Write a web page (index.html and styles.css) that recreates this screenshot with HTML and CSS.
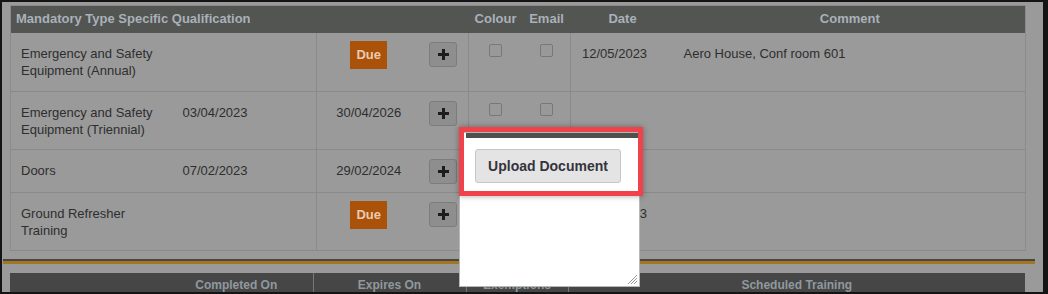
FILE: index.html
```html
<!DOCTYPE html>
<html lang="en">
<head>
    <meta charset="UTF-8">
    <meta name="viewport" content="width=device-width, initial-scale=1.0">
    <title>Mandatory Type Specific Qualification</title>
    <link rel="stylesheet" href="styles.css">
</head>
<body>
    <div class="frame">
        <table class="qual-table">
            <colgroup>
                <col class="c-name">
                <col class="c-done">
                <col class="c-expiry">
                <col class="c-add">
                <col class="c-colour">
                <col class="c-email">
                <col class="c-date">
                <col class="c-comment">
            </colgroup>
            <thead>
                <tr>
                    <th colspan="4" class="title">Mandatory Type Specific Qualification</th>
                    <th>Colour</th>
                    <th>Email</th>
                    <th>Date</th>
                    <th>Comment</th>
                </tr>
            </thead>
            <tbody>
                <tr class="tall">
                    <td>Emergency and Safety Equipment (Annual)</td>
                    <td class="done"></td>
                    <td class="expiry sep badge-cell"><span class="due">Due</span></td>
                    <td class="add-cell"><span class="add-btn"><svg width="11" height="11" viewBox="0 0 11 11"><rect x="4" y="0" width="3" height="11"/><rect x="0" y="4" width="11" height="3"/></svg></span></td>
                    <td class="check-cell sep"><span class="check"></span></td>
                    <td class="check-cell"><span class="check"></span></td>
                    <td class="date sep">12/05/2023</td>
                    <td class="comment">Aero House, Conf room 601</td>
                </tr>
                <tr class="tall">
                    <td>Emergency and Safety Equipment (Triennial)</td>
                    <td class="done">03/04/2023</td>
                    <td class="expiry sep">30/04/2026</td>
                    <td class="add-cell"><span class="add-btn"><svg width="11" height="11" viewBox="0 0 11 11"><rect x="4" y="0" width="3" height="11"/><rect x="0" y="4" width="11" height="3"/></svg></span></td>
                    <td class="check-cell sep"><span class="check"></span></td>
                    <td class="check-cell"><span class="check"></span></td>
                    <td class="date sep"></td>
                    <td class="comment"></td>
                </tr>
                <tr class="short">
                    <td>Doors</td>
                    <td class="done">07/02/2023</td>
                    <td class="expiry sep">29/02/2024</td>
                    <td class="add-cell"><span class="add-btn"><svg width="11" height="11" viewBox="0 0 11 11"><rect x="4" y="0" width="3" height="11"/><rect x="0" y="4" width="11" height="3"/></svg></span></td>
                    <td class="check-cell sep"></td>
                    <td class="check-cell"></td>
                    <td class="date sep"></td>
                    <td class="comment"></td>
                </tr>
                <tr class="tall">
                    <td>Ground Refresher Training</td>
                    <td class="done"></td>
                    <td class="expiry sep badge-cell"><span class="due">Due</span></td>
                    <td class="add-cell"><span class="add-btn"><svg width="11" height="11" viewBox="0 0 11 11"><rect x="4" y="0" width="3" height="11"/><rect x="0" y="4" width="11" height="3"/></svg></span></td>
                    <td class="check-cell sep"></td>
                    <td class="check-cell"></td>
                    <td class="date sep">12/05/2023</td>
                    <td class="comment"></td>
                </tr>
            </tbody>
        </table>

        <div class="divider"></div>

        <table class="training-table">
            <colgroup>
                <col class="t-first">
                <col class="t-done">
                <col class="t-expires">
                <col class="t-exempt">
                <col class="t-scheduled">
            </colgroup>
            <thead>
                <tr>
                    <th></th>
                    <th>Completed On</th>
                    <th class="sep">Expires On</th>
                    <th class="sep">Exemptions</th>
                    <th class="sep">Scheduled Training</th>
                </tr>
            </thead>
        </table>

        <!-- upload menu opened from the + button -->
        <div class="upload-pop">
            <button class="upload-btn">Upload Document</button>
            <svg class="grip" width="10" height="10" viewBox="0 0 10 10">
                <line x1="1" y1="10" x2="10" y2="1"/>
                <line x1="4" y1="10" x2="10" y2="4"/>
                <line x1="7" y1="10" x2="10" y2="7"/>
            </svg>
        </div>
        <div class="highlight"></div>
    </div>
</body>
</html>
```

FILE: styles.css
```css
/* Base */
body {
    margin: 0;
    background-color: #111;
    font-family: "Liberation Sans", Arial, sans-serif;
    font-size: 13px;
    color: #2e2e2e;
}

.frame {
    position: relative;
    box-sizing: border-box;
    width: 1048px;
    height: 294px;
    overflow: hidden;
    background-color: #9a9a9a;
    border: 2px solid #141414;
    border-right: 5px solid #141414;
    padding: 3px 0 0 8px;
}

/* Qualification table */
.qual-table {
    width: 1015px;
    table-layout: fixed;
    border-collapse: collapse;
    border: 1px solid #8b8b8b;
}

.c-name { width: 160px; }
.c-done { width: 146px; }
.c-expiry { width: 104px; }
.c-add { width: 48px; }
.c-colour { width: 54px; }
.c-email { width: 48px; }
.c-date { width: 104px; }
.c-comment { width: 351px; }

.qual-table th {
    height: 25px;
    padding: 0 0 2px;
    background-color: #535553;
    color: #a9b1b8;
    font-size: 13px;
    font-weight: bold;
    text-align: center;
}

.qual-table th.title {
    text-align: left;
    padding-left: 5px;
}

.qual-table td {
    vertical-align: top;
    padding: 12px 8px 0 10px;
    line-height: 17px;
    border-bottom: 1px solid #8a8a8a;
}

.qual-table tr.tall { height: 58px; }
.qual-table tr.short { height: 43px; }

.qual-table td.sep {
    border-left: 1px solid #8a8a8a;
}

.qual-table td.done {
    padding-left: 12px;
}

.qual-table td.expiry {
    padding: 12px 0 0;
    text-align: center;
}

.qual-table td.badge-cell {
    padding-top: 8px;
}

.due {
    display: inline-block;
    width: 37px;
    height: 28px;
    line-height: 28px;
    background-color: #aa5209;
    color: #e9cbb3;
    font-weight: bold;
    font-size: 13px;
}

.qual-table td.add-cell {
    padding: 9px 0 0;
    text-align: center;
}

.add-btn {
    display: inline-flex;
    align-items: center;
    justify-content: center;
    box-sizing: border-box;
    width: 28px;
    height: 25px;
    margin-left: -2px;
    background-color: #8e8e8e;
    border: 1px solid #7c7c7c;
    border-radius: 3px;
}

.add-btn svg {
    fill: #1c1c1c;
}

.qual-table td.check-cell {
    padding: 11px 0 0;
    text-align: center;
}

.check {
    display: inline-block;
    box-sizing: border-box;
    width: 13px;
    height: 13px;
    border: 1px solid #787878;
    border-radius: 2px;
    background-color: #999;
}

.qual-table td.date {
    padding-left: 11px;
}

.qual-table td.comment {
    padding-left: 9px;
}

/* Section divider */
.divider {
    width: 1032px;
    height: 2px;
    margin: 8px 0 0 -7px;
    background-color: #474747;
    border-bottom: 3px solid #a57520;
}

/* Training table */
.training-table {
    width: 1015px;
    margin-top: 9px;
    table-layout: fixed;
    border-collapse: collapse;
}

.t-first { width: 150px; }
.t-done { width: 153px; }
.t-expires { width: 153px; }
.t-exempt { width: 102px; }
.t-scheduled { width: 457px; }

.training-table th {
    height: 24px;
    padding: 5px 0 0;
    vertical-align: top;
    background-color: #464646;
    color: #8f999f;
    font-size: 12px;
    font-weight: bold;
    line-height: 14px;
    text-align: center;
}

.training-table th.sep {
    border-left: 1px solid #777;
}

/* Upload popup */
.upload-pop {
    position: absolute;
    left: 457px;
    top: 130px;
    box-sizing: border-box;
    width: 181px;
    height: 155px;
    padding: 16px 0 0 15px;
    background-color: #fff;
    border: 1px solid #b8b8b8;
}

.upload-pop::before {
    content: "";
    position: absolute;
    top: 0;
    left: 6px;
    right: 0;
    height: 5px;
    background-color: #4f514f;
}

.upload-btn {
    box-sizing: border-box;
    width: 146px;
    height: 34px;
    padding: 0;
    background-color: #e4e4e4;
    border: 1px solid #c6c6c6;
    border-radius: 3px;
    color: #34343e;
    font-family: "Liberation Sans", Arial, sans-serif;
    font-size: 14px;
    font-weight: bold;
}

.grip {
    position: absolute;
    right: 2px;
    bottom: 2px;
    stroke: #9a9a9a;
    stroke-width: 1;
}

.highlight {
    position: absolute;
    left: 457px;
    top: 125px;
    box-sizing: border-box;
    width: 184px;
    height: 69px;
    border: 5px solid #f0424a;
    box-shadow: 0 0 6px rgba(0, 0, 0, 0.35);
}
```
